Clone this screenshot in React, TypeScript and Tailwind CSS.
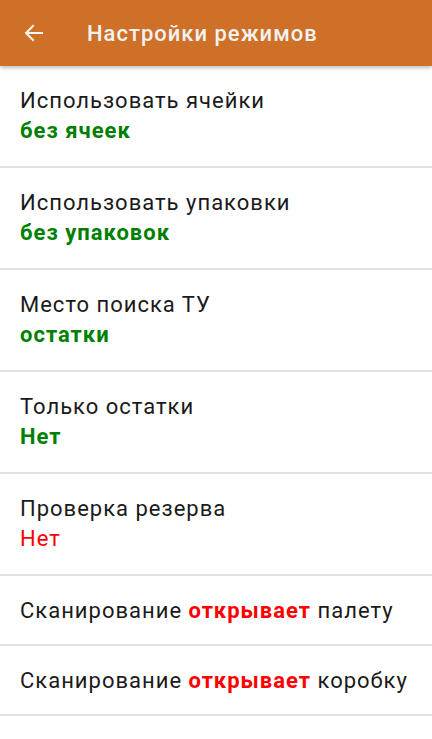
import React from 'react';

type Item = {
  title: string;
  value?: string;
  tone?: 'green' | 'red';
  bold?: boolean;
};

const items: Item[] = [
  { title: 'Использовать ячейки', value: 'без ячеек', tone: 'green', bold: true },
  { title: 'Использовать упаковки', value: 'без упаковок', tone: 'green', bold: true },
  { title: 'Место поиска ТУ', value: 'остатки', tone: 'green', bold: true },
  { title: 'Только остатки', value: 'Нет', tone: 'green', bold: true },
  { title: 'Проверка резерва', value: 'Нет', tone: 'red' },
];

const scans = ['палету', 'коробку'];

const App: React.FC = () => {
  return (
    <div className="min-h-screen bg-white font-['Roboto',sans-serif] text-[22px] tracking-[1px] text-[#1a1a1a]">
      {/* Toolbar */}
      <div className="relative z-10 flex h-[66px] items-center bg-[#cf7029] shadow-[0_2px_4px_rgba(0,0,0,0.25)]">
        <div className="flex w-[87px] justify-start pl-[22px]">
          <svg width="24" height="24" viewBox="0 0 24 24" fill="none">
            <path
              d="M20 12H4.5M11 5l-7 7 7 7"
              stroke="#f5f5f5"
              strokeWidth="2"
              strokeLinecap="square"
            />
          </svg>
        </div>
        <h1 className="text-[22px] font-medium text-[#f2f2f2]">Настройки режимов</h1>
      </div>

      {/* Settings list */}
      <div>
        {items.map((it) => (
          <div
            key={it.title}
            className="border-b-2 border-[#e2e2e2] px-5 pb-[20px] pt-[20px] leading-[30px]"
          >
            <div>{it.title}</div>
            <div
              className={
                (it.tone === 'red' ? 'text-[#ff0000]' : 'text-[#008000]') +
                (it.bold ? ' font-bold' : '')
              }
            >
              {it.value}
            </div>
          </div>
        ))}
        {scans.map((s) => (
          <div
            key={s}
            className="border-b-2 border-[#e2e2e2] px-5 pb-[18px] pt-[20px] leading-[30px]"
          >
            Сканирование <span className="font-bold text-[#ff0000]">открывает</span> {s}
          </div>
        ))}
      </div>
    </div>
  );
};

export default App;
